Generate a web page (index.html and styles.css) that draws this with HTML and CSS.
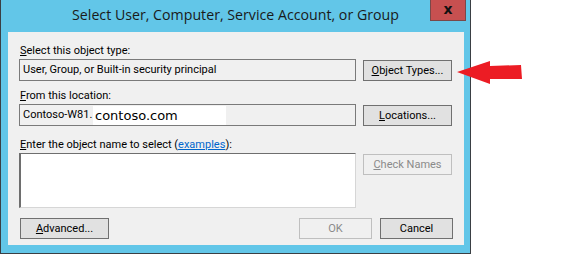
FILE: index.html
```html
<!DOCTYPE html>
<html>
<head>
<meta charset="utf-8">
<link rel="stylesheet" href="styles.css">
</head>
<body>
<div class="window">
  <div class="titlebar">
    <div></div>
    <div class="title">Select User, Computer, Service Account, or Group</div>
    <div class="close">x</div>
  </div>
  <div class="panel">
    <div class="label lbl1"><u>S</u>elect this object type:</div>
    <div class="row">
      <div class="field">User, Group, or Built-in security principal</div>
      <div class="btn"><u>O</u>bject Types...</div>
    </div>
    <div class="label lbl2"><u>F</u>rom this location:</div>
    <div class="row">
      <div class="field"><span class="loc">Contoso-W81.</span><span class="patch">contoso.com</span></div>
      <div class="btn"><u>L</u>ocations...</div>
    </div>
    <div class="label lbl3"><u>E</u>nter the object name to select (<span class="link">examples</span>):</div>
    <div class="row top">
      <div class="textarea"></div>
      <div class="btn disabled"><u>C</u>heck Names</div>
    </div>
    <div class="footer">
      <div class="btn adv"><u>A</u>dvanced...</div>
      <div class="btn small disabled">OK</div>
      <div class="btn small">Cancel</div>
    </div>
  </div>
</div>
<svg class="arrow" width="70" height="30" viewBox="455 58 70 30">
  <polygon points="457,72 490,61 490,66 521,65 522,79 490,79 490,84" fill="#ec1c24"/>
</svg>
</body>
</html>
```

FILE: styles.css
```css
html, body {
  margin: 0;
  padding: 0;
  background: #ffffff;
}
body {
  font-family: "Roboto", "Open Sans", sans-serif;
  font-size: 11px;
  color: #000;
  position: relative;
  width: 570px;
  height: 260px;
  overflow: hidden;
}
.window {
  width: 471px;
  height: 254px;
  box-sizing: border-box;
  background: #62c6e8;
  border-left: 1px solid #3a3f44;
  border-right: 1px solid #3a3f44;
  border-bottom: 1px solid #3a3f44;
  padding: 0 6px 8px 7px;
  display: flex;
  flex-direction: column;
}
.titlebar {
  height: 32px;
  margin: 0 -6px 0 -7px;
  display: grid;
  grid-template-columns: 1fr auto 1fr;
  align-items: start;
}
.title {
  font-family: "Open Sans", sans-serif;
  font-size: 14.2px;
  color: #1a1a1a;
  padding-top: 5px;
  line-height: 20px;
  white-space: nowrap;
}
.close {
  justify-self: end;
  margin-right: 4px;
  width: 34px;
  height: 20px;
  background: #c75050;
  border: 1px solid #7a4848;
  border-top: none;
  color: #111;
  font-weight: bold;
  font-size: 14px;
  line-height: 19px;
  text-align: center;
  font-family: "DejaVu Sans", sans-serif;
}
.panel {
  flex: 1;
  background: #f0f0f0;
  padding: 11px 11px 0 11px;
  display: flex;
  flex-direction: column;
}
.label {
  line-height: 15px;
  height: 16px;
  margin-left: 1px;
}
.lbl2 { margin-top: 7px; }
.lbl3 { margin-top: 11px; }
.row {
  display: flex;
  align-items: center;
  gap: 7px;
}
.row.top { align-items: flex-start; }
.field {
  width: 337px;
  height: 22px;
  box-sizing: border-box;
  border: 1px solid #7a7a7a;
  background: #f0f0f0;
  padding-left: 3px;
  line-height: 20px;
  display: flex;
  align-items: center;
  white-space: nowrap;
}
.loc {
  width: 70px;
}
.patch {
  background: #fff;
  font-family: "DejaVu Sans", sans-serif;
  font-size: 13px;
  line-height: 19px;
  width: 133px;
  padding-left: 2px;
  box-sizing: border-box;
}
.btn {
  width: 89px;
  height: 21px;
  box-sizing: border-box;
  border: 1px solid #707070;
  background: #e1e1e1;
  text-align: center;
  line-height: 19px;
  white-space: nowrap;
}
.btn.disabled {
  border-color: #bfbfbf;
  background: #f0f0f0;
  color: #8a8a8a;
}
.textarea {
  width: 337px;
  height: 55px;
  box-sizing: border-box;
  background: #fff;
  border-top: 1px solid #6e6e6e;
  border-left: 2px solid #6e6e6e;
  border-right: 1px solid #d6d6d6;
  border-bottom: 1px solid #d6d6d6;
}
.row.top .btn { margin-top: 1px; }
.footer {
  margin-top: 10px;
  display: flex;
  gap: 8px;
  padding-left: 1px;
}
.btn.adv { margin-right: auto; }
.btn.small { width: 73px; }
.link {
  color: #0066cc;
  text-decoration: underline;
}
.arrow {
  position: absolute;
  left: 455px;
  top: 58px;
}
```
